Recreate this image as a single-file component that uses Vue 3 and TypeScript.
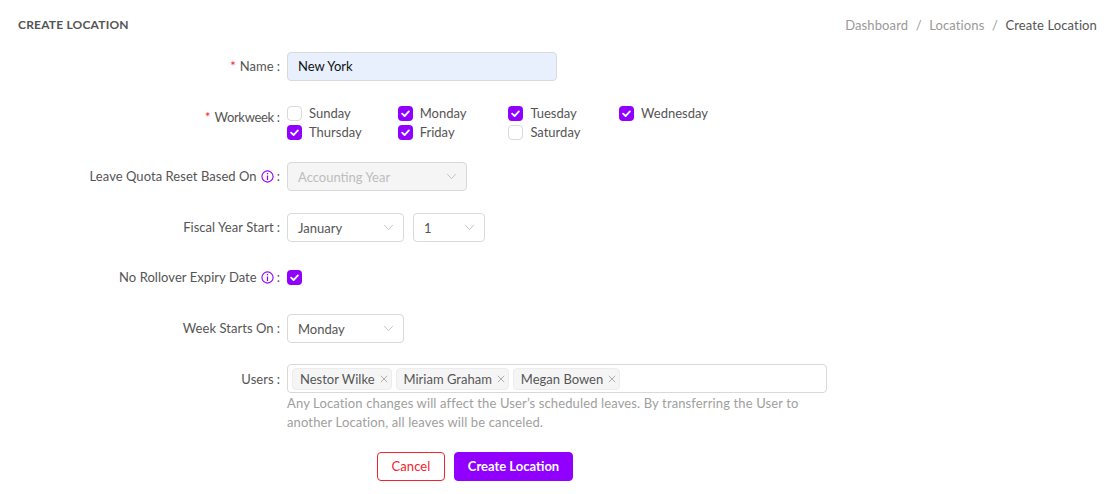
<script setup lang="ts">
const days = [
  { name: 'Sunday', on: false },
  { name: 'Monday', on: true },
  { name: 'Tuesday', on: true },
  { name: 'Wednesday', on: true },
  { name: 'Thursday', on: true },
  { name: 'Friday', on: true },
  { name: 'Saturday', on: false },
]
const users = ['Nestor Wilke', 'Miriam Graham', 'Megan Bowen']
</script>

<template>
  <div class="page">
    <header class="head">
      <h1 class="title">CREATE LOCATION</h1>
      <nav class="crumbs">
        <span class="muted">Dashboard</span><span class="sep">/</span>
        <span class="muted">Locations</span><span class="sep">/</span>
        <span class="current">Create Location</span>
      </nav>
    </header>

    <form class="form" @submit.prevent>
      <div class="row">
        <label class="label"><i class="req">*</i>Name<b class="colon">:</b></label>
        <div class="name-input">New York</div>
      </div>

      <div class="row">
        <label class="label"><i class="req">*</i><span class="tight">Workweek</span><b class="colon">:</b></label>
        <div class="days">
          <span v-for="d in days" :key="d.name" class="day">
            <span class="box" :class="{ on: d.on }">
              <svg v-if="d.on" viewBox="0 0 16 16" width="15" height="15"><path d="M4.4 8.2 7 10.7 11.6 5.8" fill="none" stroke="#fff" stroke-width="2" stroke-linecap="round" stroke-linejoin="round"/></svg>
            </span>
            {{ d.name }}
          </span>
        </div>
      </div>

      <div class="row">
        <label class="label">Leave Quota Reset Based On
          <svg class="info" viewBox="0 0 14 14" width="13" height="13"><circle cx="7" cy="7" r="6" fill="none" stroke="#9100ff" stroke-width="1.2"/><path d="M7 5.8v5M7 3.2v1.3" stroke="#9100ff" stroke-width="1.3"/></svg>
          <b class="colon">:</b></label>
        <div class="select disabled w180">Accounting Year
          <svg class="caret" viewBox="0 0 12 8" width="11" height="7"><path d="M1 1l5 5.5L11 1" fill="none" stroke="#bdbdbd" stroke-width="1"/></svg>
        </div>
      </div>

      <div class="row">
        <label class="label">Fiscal Year Start<b class="colon">:</b></label>
        <div class="inline">
          <div class="select w117">January
            <svg class="caret" viewBox="0 0 12 8" width="11" height="7"><path d="M1 1l5 5.5L11 1" fill="none" stroke="#bdbdbd" stroke-width="1"/></svg>
          </div>
          <div class="select w72">1
            <svg class="caret" viewBox="0 0 12 8" width="11" height="7"><path d="M1 1l5 5.5L11 1" fill="none" stroke="#bdbdbd" stroke-width="1"/></svg>
          </div>
        </div>
      </div>

      <div class="row">
        <label class="label">No Rollover Expiry Date
          <svg class="info" viewBox="0 0 14 14" width="13" height="13"><circle cx="7" cy="7" r="6" fill="none" stroke="#9100ff" stroke-width="1.2"/><path d="M7 5.8v5M7 3.2v1.3" stroke="#9100ff" stroke-width="1.3"/></svg>
          <b class="colon">:</b></label>
        <div class="center">
          <span class="box on">
            <svg viewBox="0 0 16 16" width="15" height="15"><path d="M4.4 8.2 7 10.7 11.6 5.8" fill="none" stroke="#fff" stroke-width="2" stroke-linecap="round" stroke-linejoin="round"/></svg>
          </span>
        </div>
      </div>

      <div class="row">
        <label class="label">Week Starts On<b class="colon">:</b></label>
        <div class="select w117">Monday
          <svg class="caret" viewBox="0 0 12 8" width="11" height="7"><path d="M1 1l5 5.5L11 1" fill="none" stroke="#bdbdbd" stroke-width="1"/></svg>
        </div>
      </div>

      <div class="row">
        <label class="label users-label">Users<b class="colon">:</b></label>
        <div>
          <div class="tags">
            <span v-for="u in users" :key="u" class="tag">{{ u }}
              <svg viewBox="0 0 10 10" width="8" height="8"><path d="M1 1l8 8M9 1l-8 8" stroke="#9a9a9a" stroke-width="1"/></svg>
            </span>
          </div>
          <p class="help">Any Location changes will affect the User’s scheduled leaves. By transferring the User to<br>another Location, all leaves will be canceled.</p>
        </div>
      </div>

      <div class="actions">
        <button type="button" class="btn cancel">Cancel</button>
        <button type="submit" class="btn primary">Create Location</button>
      </div>
    </form>
  </div>
</template>

<style scoped>
.page {
  width: 1111px;
  height: 494px;
  box-sizing: border-box;
  background: #fff;
  font-family: Lato, "Liberation Sans", sans-serif;
  font-size: 13px;
  color: #555;
  overflow: hidden;
}
.head {
  display: flex;
  justify-content: space-between;
  align-items: center;
  height: 49px;
  padding: 0 14px 0 18px;
}
.title {
  margin: 0;
  font-size: 12px;
  font-weight: 700;
  letter-spacing: 0.2px;
  color: #555;
}
.crumbs { display: flex; align-items: center; letter-spacing: 0.12px; }
.muted { color: #999; }
.current { color: #555; }
.sep { color: #999; margin: 0 7.5px; }
.form {
  display: flex;
  flex-direction: column;
  gap: 21.5px;
  padding-top: 3px;
}
.row {
  display: grid;
  grid-template-columns: 281px 1fr;
  column-gap: 6px;
  align-items: start;
}
.label {
  display: flex;
  justify-content: flex-end;
  align-items: center;
  height: 28px;
  letter-spacing: 0.05px;
}
.users-label { height: 29px; }
.tight { letter-spacing: -0.35px; }
.req { color: #f5222d; font-style: normal; margin-right: 4px; }
.colon { font-weight: 400; margin-left: 3px; margin-right: 1px; }
.info { margin-left: 4px; }
.name-input {
  box-sizing: border-box;
  width: 270px;
  height: 29px;
  line-height: 27px;
  padding: 0 10px;
  border: 1px solid #d9d9d9;
  border-radius: 4px;
  background: #e8f0fe;
  color: #111;
}
.days {
  display: grid;
  box-sizing: border-box;
  grid-template-columns: repeat(4, 110.7px);
  grid-auto-rows: 19px;
  width: 443px;
  height: 38px;
  padding-top: 1px;
}
.day { display: flex; align-items: center; gap: 7px; white-space: nowrap; }
.box {
  box-sizing: border-box;
  display: inline-block;
  flex: none;
  width: 15px;
  height: 15px;
  border: 1px solid #d9d9d9;
  border-radius: 4px;
  background: #fff;
}
.box.on { border: 0; background: #9100ff; }
.box svg { display: block; }
.center { display: flex; align-items: center; height: 29px; }
.inline { display: flex; gap: 9px; }
.select {
  position: relative;
  box-sizing: border-box;
  height: 29px;
  line-height: 28px;
  padding: 0 10px;
  border: 1px solid #d9d9d9;
  border-radius: 4px;
  background: #fff;
}
.select.disabled { background: #f5f5f5; color: #bdbdbd; }
.caret { position: absolute; right: 9px; top: 10px; }
.w180 { width: 180px; }
.w117 { width: 117px; }
.w72 { width: 72px; }
.tags {
  box-sizing: border-box;
  display: flex;
  gap: 4px;
  align-items: center;
  width: 540px;
  height: 29px;
  padding: 0 4px;
  border: 1px solid #d9d9d9;
  border-radius: 4px;
}
.tag {
  display: inline-flex;
  align-items: center;
  gap: 5px;
  height: 22px;
  padding: 0 3px 0 7px;
  box-sizing: border-box;
  background: #f5f5f5;
  border: 1px solid #ececec;
  border-radius: 4px;
}
.help {
  margin: 1px 0 0;
  line-height: 19px;
  color: #a0a0a0;
  letter-spacing: 0.13px;
}
.actions {
  display: flex;
  justify-content: center;
  gap: 9px;
  width: 950px;
  margin-top: -2px;
}
.btn {
  box-sizing: border-box;
  height: 29px;
  padding: 0;
  border-radius: 4px;
  font: inherit;
}
.cancel { width: 68px; background: #fff; border: 1px solid #f5222d; color: #f5222d; letter-spacing: 0.1px; }
.primary { width: 119px; background: #9100ff; border: 1px solid #9100ff; color: #fff; font-weight: 700; }
</style>
